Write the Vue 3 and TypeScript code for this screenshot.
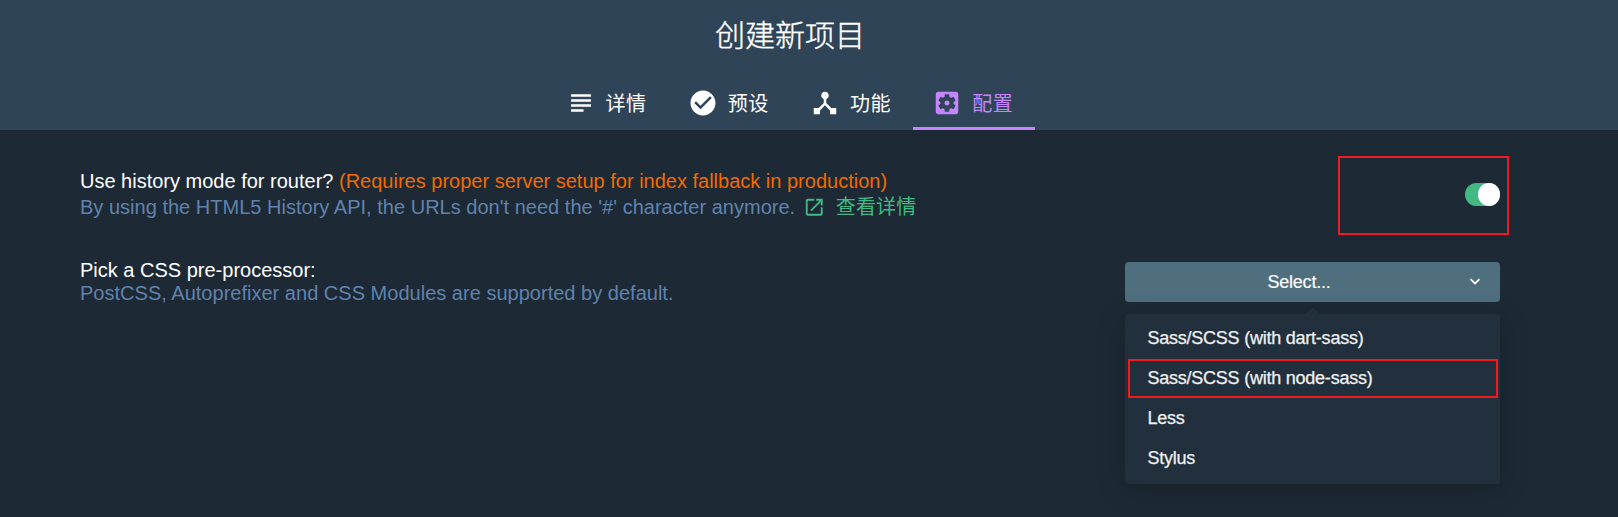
<script setup lang="ts">
import { ref } from 'vue'

interface Tab {
  id: string
  label: string
  icon: string
}

const tabs: Tab[] = [
  { id: 'details', label: '详情', icon: 'M14 17H4v2h10v-2zm6-8H4v2h16V9zM4 15h16v-2H4v2zM4 5v2h16V5H4z' },
  { id: 'presets', label: '预设', icon: 'M12 2C6.48 2 2 6.48 2 12s4.48 10 10 10 10-4.48 10-10S17.52 2 12 2zm-2 15l-5-5 1.41-1.41L10 14.17l7.59-7.59L19 8l-9 9z' },
  { id: 'features', label: '功能', icon: 'M17 16l-4-4V8.82C14.16 8.4 15 7.3 15 6c0-1.66-1.34-3-3-3S9 4.34 9 6c0 1.3.84 2.4 2 2.82V12l-4 4H3v5h5v-3.05l4-4.2 4 4.2V21h5v-5h-4z' },
  { id: 'config', label: '配置', icon: 'M12 10c-1.1 0-2 .9-2 2s.9 2 2 2 2-.9 2-2-.9-2-2-2zm7-7H5c-1.11 0-2 .9-2 2v14c0 1.1.89 2 2 2h14c1.11 0 2-.9 2-2V5c0-1.1-.89-2-2-2zm-1.75 9c0 .23-.02.46-.05.68l1.48 1.16c.13.11.17.3.08.45l-1.4 2.42c-.09.15-.27.21-.43.15l-1.74-.7c-.36.28-.76.51-1.18.69l-.26 1.85c-.03.17-.18.3-.35.3h-2.8c-.17 0-.32-.13-.35-.29l-.26-1.85c-.43-.18-.82-.41-1.18-.69l-1.74.7c-.16.06-.34 0-.43-.15l-1.4-2.42c-.09-.15-.05-.34.08-.45l1.48-1.16c-.03-.23-.05-.46-.05-.69 0-.23.02-.46.05-.68l-1.48-1.16c-.13-.11-.17-.3-.08-.45l1.4-2.42c.09-.15.27-.21.43-.15l1.74.7c.36-.28.76-.51 1.18-.69l.26-1.85c.03-.17.18-.3.35-.3h2.8c.17 0 .32.13.35.29l.26 1.85c.43.18.82.41 1.18.69l1.74-.7c.16-.06.34 0 .43.15l1.4 2.42c.09.15.05.34-.08.45l-1.48 1.16c.03.23.05.46.05.69z' },
]
const activeTab = ref('config')
const historyMode = ref(true)
const options: string[] = ['Sass/SCSS (with dart-sass)', 'Sass/SCSS (with node-sass)', 'Less', 'Stylus']
const marked = options[1]
</script>

<template>
  <div class="page">
    <header class="header">
      <h1 class="title">创建新项目</h1>
      <nav class="tabs">
        <button
          v-for="tab in tabs"
          :key="tab.id"
          class="tab"
          :class="{ active: tab.id === activeTab }"
          @click="activeTab = tab.id"
        >
          <svg class="tab-icon" viewBox="0 0 24 24"><path :d="tab.icon" /></svg>
          <span class="tab-label">{{ tab.label }}</span>
        </button>
      </nav>
    </header>

    <main class="content">
      <section class="prompt first">
        <div class="text">
          <div class="message">
            Use history mode for router?
            <span class="warn">(Requires proper server setup for index fallback in production)</span>
          </div>
          <div class="description tall">
            <span>By using the HTML5 History API, the URLs don't need the '#' character anymore.</span>
            <a class="more">
              <svg class="more-icon" viewBox="0 0 24 24"><path d="M19 19H5V5h7V3H5c-1.11 0-2 .9-2 2v14c0 1.1.89 2 2 2h14c1.1 0 2-.9 2-2v-7h-2v7zM14 3v2h3.59l-9.83 9.83 1.41 1.41L19 6.41V10h2V3h-7z" /></svg>
              <span class="more-label">查看详情</span>
            </a>
          </div>
        </div>
        <div class="switch-frame">
          <button class="switch" :class="{ on: historyMode }" @click="historyMode = !historyMode">
            <span class="knob"></span>
          </button>
        </div>
      </section>

      <section class="prompt second">
        <div class="text">
          <div class="message">Pick a CSS pre-processor:</div>
          <div class="description">PostCSS, Autoprefixer and CSS Modules are supported by default.</div>
        </div>
        <div class="select">
          <button class="select-button">
            <span class="select-label">Select...</span>
            <svg class="chevron" viewBox="0 0 24 24"><path d="M7.41 7.84L12 12.42l4.59-4.58L18 9.25l-6 6-6-6z" /></svg>
          </button>
          <ul class="menu">
            <li v-for="option in options" :key="option" class="option" :class="{ marked: option === marked }">
              <span>{{ option }}</span>
            </li>
          </ul>
        </div>
      </section>
    </main>
  </div>
</template>

<style>
body {
  margin: 0;
  background: #1d2935;
}
</style>

<style scoped>
.page {
  box-sizing: border-box;
  height: 517px;
  overflow: hidden;
  background: #1d2935;
  color: #fff;
  font-family: "Liberation Sans", Arial, "Noto Sans CJK SC", sans-serif;
  font-size: 20px;
}
button {
  border: 0;
  padding: 0;
  background: none;
  color: inherit;
  font: inherit;
}
.header {
  box-sizing: border-box;
  height: 130px;
  padding-right: 37px;
  background: #304458;
  display: flex;
  flex-direction: column;
  align-items: center;
}
.title {
  margin: 0;
  height: 76px;
  padding-right: 1px;
  line-height: 71px;
  font-size: 30px;
  font-weight: 300;
  -webkit-text-stroke: 0.4px #fff;
}
.tabs {
  display: flex;
  height: 54px;
}
.tab {
  box-sizing: border-box;
  width: 122.25px;
  padding: 0 0 0 19.5px;
  display: flex;
  align-items: center;
  gap: 10px;
  line-height: 54px;
}
.tab-label {
  padding-top: 2px;
  letter-spacing: 0.4px;
}
.tab.active {
  color: #c485ff;
  box-shadow: inset 0 -3px #c485ff;
}
.tab-icon {
  width: 30px;
  height: 30px;
  fill: currentColor;
}
.content {
  padding: 26px 109px 0 80px;
}
.prompt {
  display: flex;
  justify-content: space-between;
}
.message {
  line-height: 23px;
}
.warn {
  color: #f26a00;
}
.description {
  display: flex;
  line-height: 23px;
  letter-spacing: 0.015px;
  color: #6083ae;
}
.description.tall {
  line-height: 28px;
}
.more {
  display: flex;
  align-items: center;
  color: #42b983;
}
.more-icon {
  width: 22.5px;
  height: 22.5px;
  margin: 0 10px 0 8px;
  fill: currentColor;
}
.more-label {
  letter-spacing: 0.2px;
}
.first .text {
  padding-top: 14px;
}
.switch-frame {
  box-sizing: border-box;
  width: 171px;
  height: 79px;
  padding: 0 7px 2px 0;
  border: 2px solid #ed1c24;
  display: flex;
  align-items: center;
  justify-content: flex-end;
}
.switch {
  width: 35px;
  height: 23px;
  border-radius: 12px;
  background: #4f6f7f;
  display: flex;
}
.switch.on {
  background: #42b983;
  justify-content: flex-end;
}
.knob {
  width: 22.5px;
  height: 23px;
  border-radius: 50%;
  background: #fff;
}
.second {
  padding: 27px 9px 0 0;
}
.second .text {
  margin-top: -3px;
}
.select {
  width: 375px;
}
.select-button {
  width: 375px;
  height: 40px;
  padding: 0 15px 0 0;
  border-radius: 4px;
  background: #4f6f7f;
  display: flex;
  align-items: center;
}
.select-label {
  flex: 1;
  padding-left: 8px;
  text-align: center;
  font-size: 18px;
  letter-spacing: -0.2px;
  -webkit-text-stroke: 0.15px currentColor;
}
.chevron {
  width: 20px;
  height: 20px;
  fill: currentColor;
}
.menu {
  position: relative;
  box-sizing: border-box;
  height: 170px;
  margin: 12px 0 0;
  padding: 5px 2px 5px 3px;
  list-style: none;
  border-radius: 4px;
  background: #22303d;
  box-shadow: 0 5px 30px rgba(0, 0, 0, 0.2);
}
.menu::before {
  content: "";
  position: absolute;
  top: -7px;
  left: 180.5px;
  border: solid transparent;
  border-width: 0 7px 7px;
  border-bottom-color: #22303d;
}
.option {
  box-sizing: border-box;
  height: 40px;
  padding: 0 19.4px;
  line-height: 39px;
  font-size: 18px;
  letter-spacing: -0.23px;
  color: #f0f2f4;
  -webkit-text-stroke: 0.25px currentColor;
}
.option.marked {
  height: 39px;
  margin-bottom: 1px;
  padding: 0 17.4px;
  border: 2px solid #ed1c24;
  line-height: 35px;
}
</style>
